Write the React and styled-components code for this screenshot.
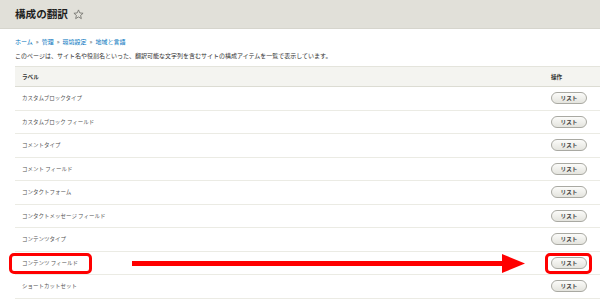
import React from "react";
import styled, { createGlobalStyle } from "styled-components";

const Global = createGlobalStyle`
  html, body { margin: 0; padding: 0; background: #fff; }
  body {
    width: 600px; height: 306px; overflow: hidden;
    font-family: "Noto Sans CJK JP", "Noto Sans", sans-serif;
    color: #333;
  }
`;

const Header = styled.header`
  height: 29px;
  background: #e1e0d9;
  border-bottom: 1px solid #d6d5cd;
  box-sizing: border-box;
  display: flex;
  align-items: center;
  gap: 5px;
  padding: 0 0 0 15px;
`;

const Title = styled.h1`
  margin: 0;
  font-size: 10.6px;
  font-weight: 700;
  color: #1f1f1f;
  line-height: 1;
  letter-spacing: 0;
`;

const Content = styled.main`
  padding: 8px 0 0 15px;
`;

const Breadcrumb = styled.nav`
  display: flex;
  align-items: center;
  gap: 3px;
  font-size: 6px;
  line-height: 10px;
  color: #0074bd;
`;

const Sep = styled.span`
  color: #555;
  font-size: 6px;
`;

const Desc = styled.p`
  margin: 4px 0 5px;
  font-size: 6px;
  line-height: 10px;
  color: #333;
`;

const Table = styled.div`
  width: 585px;
  display: grid;
  grid-template-columns: 1fr 55px;
`;

const HeadCell = styled.div`
  height: 21px;
  box-sizing: border-box;
  background: #f4f4f0;
  border-top: 1px solid #e4e4dc;
  border-bottom: 1px solid #dcdcd3;
  display: flex;
  align-items: center;
  padding-left: ${(p) => (p.$op ? "6px" : "7px")};
  font-size: 5.6px;
  font-weight: 700;
  color: #333;
`;

const Row = styled.div`
  grid-column: 1 / -1;
  display: grid;
  grid-template-columns: 1fr 55px;
  height: 23.5px;
  box-sizing: border-box;
  border-bottom: 1px solid #ebebe4;
  position: relative;
`;

const Label = styled.div`
  display: flex;
  align-items: center;
  padding-left: 7px;
  font-size: 5.5px;
  color: #555;
  white-space: pre;
`;

const OpCell = styled.div`
  display: flex;
  align-items: center;
  padding-left: 6px;
`;

const ListButton = styled.button`
  width: 36px;
  height: 12px;
  box-sizing: border-box;
  border: 1px solid #a9a9a2;
  border-radius: 7px;
  background: linear-gradient(#fbfbf9, #e4e4de);
  font-family: inherit;
  font-size: 5.6px;
  font-weight: 700;
  color: #444;
  padding: 0;
  display: flex;
  align-items: center;
  justify-content: center;
  cursor: pointer;
`;

const Highlight = styled.div`
  position: absolute;
  top: 1px;
  left: ${(p) => p.$left}px;
  width: ${(p) => p.$width}px;
  height: 21px;
  box-sizing: border-box;
  border: 3px solid #ff0000;
  border-radius: 5px;
  pointer-events: none;
`;

const Arrow = styled.svg`
  position: absolute;
  left: 117px;
  top: 1px;
  pointer-events: none;
`;

const Star = () => (
  <svg width="11" height="11" viewBox="0 0 24 24" aria-hidden="true">
    <polygon
      points="12,2 14.9,8.6 22,9.3 16.6,14 18.2,21 12,17.3 5.8,21 7.4,14 2,9.3 9.1,8.6"
      fill="none"
      stroke="#6f6f6a"
      strokeWidth="1.8"
      strokeLinejoin="round"
    />
  </svg>
);

const items = [
  "カスタムブロックタイプ",
  "カスタムブロック フィールド",
  "コメントタイプ",
  "コメント フィールド",
  "コンタクトフォーム",
  "コンタクトメッセージ フィールド",
  "コンテンツタイプ",
  "コンテンツ フィールド",
  "ショートカットセット",
];

export default function App() {
  return (
    <>
      <Global />
      <Header>
        <Title>構成の翻訳</Title>
        <Star />
      </Header>
      <Content>
        <Breadcrumb>
          <span>ホーム</span>
          <Sep>»</Sep>
          <span>管理</span>
          <Sep>»</Sep>
          <span>環境設定</span>
          <Sep>»</Sep>
          <span>地域と言語</span>
        </Breadcrumb>
        <Desc>
          このページは、サイト名や役割名といった、翻訳可能な文字列を含むサイトの構成アイテムを一覧で表示しています。
        </Desc>
        <Table>
          <HeadCell>ラベル</HeadCell>
          <HeadCell $op>操作</HeadCell>
          {items.map((label, i) => (
            <Row key={label}>
              <Label>{label}</Label>
              <OpCell>
                <ListButton>リスト</ListButton>
              </OpCell>
              {i === 7 && (
                <>
                  <Highlight $left={-6} $width={83} />
                  <Highlight $left={530} $width={47} />
                  <Arrow width="394" height="21" viewBox="0 0 394 21">
                    <rect x="0" y="8" width="374" height="5" fill="#ff0000" />
                    <polygon points="370,1 393,10.5 370,20" fill="#ff0000" />
                  </Arrow>
                </>
              )}
            </Row>
          ))}
        </Table>
      </Content>
    </>
  );
}
